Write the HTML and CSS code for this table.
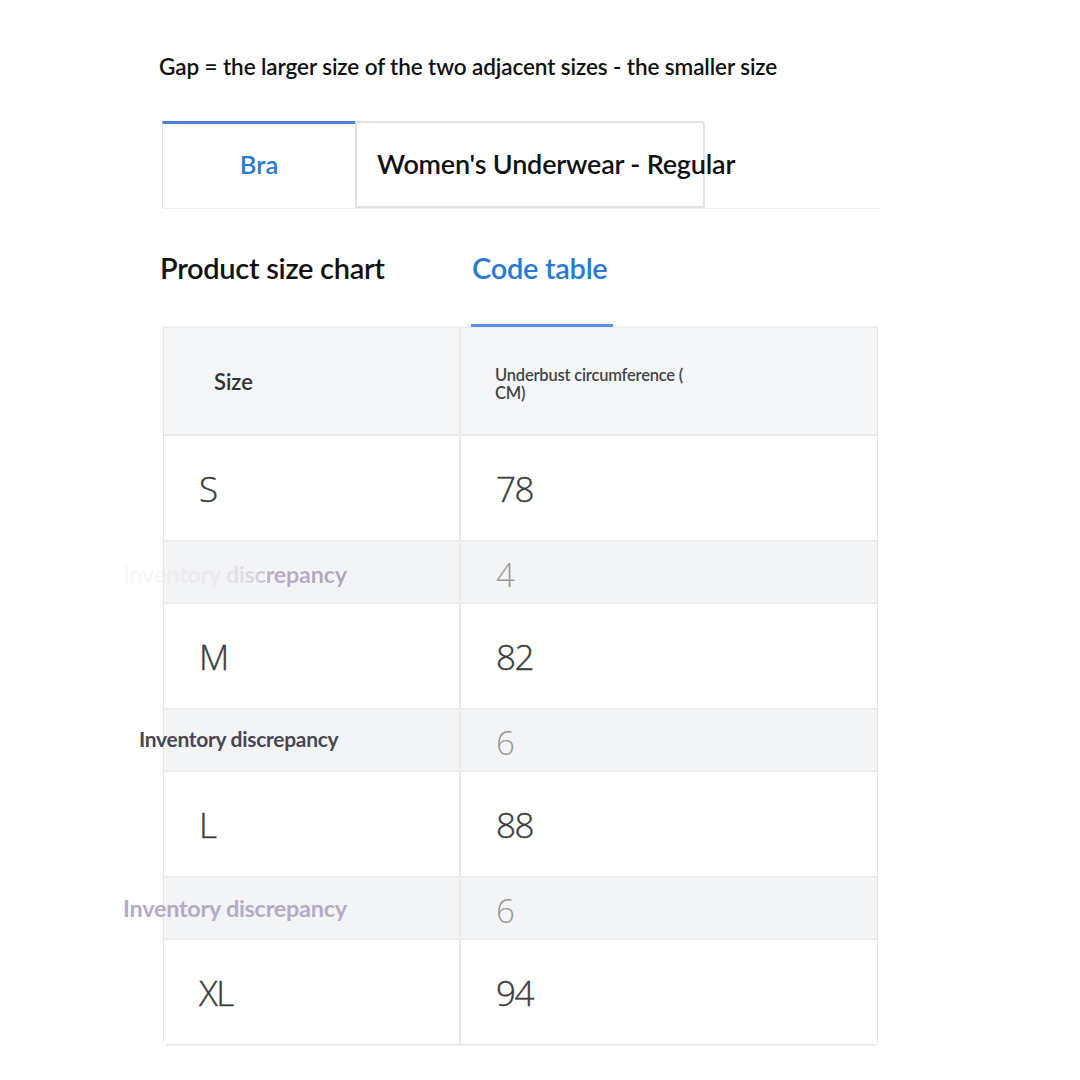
FILE: index.html
```html
<!DOCTYPE html>
<html>
<head>
<meta charset="utf-8">
<link rel="stylesheet" href="styles.css">
</head>
<body>
<div class="page">
  <div class="note">Gap = the larger size of the two adjacent sizes - the smaller size</div>
  <div class="tabs">
    <div class="tab tab-active">Bra</div>
    <div class="tab tab-plain">Women's Underwear - Regular</div>
  </div>
  <div class="subtabs">
    <div class="subtab subtab-plain">Product size chart</div>
    <div class="subtab subtab-active">Code table</div>
  </div>
  <div class="table">
    <div class="row head">
      <div class="cell c1 h-size">Size</div>
      <div class="cell c2 h-under">Underbust circumference (<br>CM)</div>
    </div>
    <div class="row size"><div class="cell c1">S</div><div class="cell c2">78</div></div>
    <div class="row gap"><div class="cell c1"><span class="lbl lbl-fade">Inventory discrepancy</span></div><div class="cell c2">4</div></div>
    <div class="row size"><div class="cell c1">M</div><div class="cell c2">82</div></div>
    <div class="row gap"><div class="cell c1"><span class="lbl lbl-dark">Inventory discrepancy</span></div><div class="cell c2">6</div></div>
    <div class="row size"><div class="cell c1">L</div><div class="cell c2">88</div></div>
    <div class="row gap"><div class="cell c1"><span class="lbl lbl-lav">Inventory discrepancy</span></div><div class="cell c2">6</div></div>
    <div class="row size last"><div class="cell c1">XL</div><div class="cell c2">94</div></div>
  </div>
</div>
</body>
</html>
```
FILE: styles.css
```css
html, body {
  margin: 0;
  padding: 0;
  background: #fff;
}
body {
  font-family: Lato, "Open Sans", sans-serif;
  color: #111;
}
.page {
  width: 1080px;
  height: 1080px;
  padding-top: 52px;
  box-sizing: border-box;
}
.note {
  margin-left: 159px;
  font-size: 22.5px;
  font-weight: 600;
  line-height: 30px;
  color: #111;
  letter-spacing: -0.1px;
}
.tabs {
  display: flex;
  margin-top: 39px;
  margin-left: 162px;
  width: 718px;
  height: 87px;
  border-bottom: 1px solid #f0f0f0;
}
.tab {
  box-sizing: border-box;
  height: 87px;
  display: flex;
  align-items: center;
  font-weight: 600;
  white-space: nowrap;
}
.tab-active {
  width: 193px;
  justify-content: center;
  font-size: 25.5px;
  color: #2a7ad4;
  border-top: 3px solid #4a7fdc;
  border-left: 1px solid #e6e6e6;
  padding-bottom: 4px;
  background: #fff;
}
.tab-plain {
  width: 350px;
  padding-left: 20px;
  font-size: 27px;
  color: #111;
  border: 2px solid #e2e2e2;
  border-radius: 0 4px 0 0;
  padding-bottom: 2px;
  letter-spacing: -0.2px;
  overflow: visible;
}
.subtabs {
  display: flex;
  height: 118px;
  margin-left: 160px;
  width: 718px;
  box-sizing: border-box;
  border-bottom: 1px solid #f2f2f2;
}
.subtab {
  font-size: 29px;
  font-weight: 600;
  letter-spacing: -0.3px;
  height: 118px;
  box-sizing: border-box;
  padding-top: 41px;
  line-height: 36px;
}
.subtab-plain {
  color: #111;
  width: 311px;
}
.subtab-active {
  color: #2a7ad4;
  width: 142px;
  border-bottom: 3px solid #5b8fe4;
  padding-left: 1px;
}
.table {
  margin-left: 163px;
  width: 715px;
  border: 1px solid #e4e4e4;
  border-top: none;
  border-radius: 0 0 5px 5px;
  box-sizing: border-box;
  box-shadow: 0 1px 2px rgba(0,0,0,0.06);
}
.row {
  display: grid;
  grid-template-columns: 297px 1fr;
  border-bottom: 2px solid #ebebeb;
  box-sizing: border-box;
}
.row.last {
  border-bottom: none;
}
.cell {
  display: flex;
  align-items: center;
  position: relative;
}
.c1 {
  border-right: 2px solid #e8e8e8;
}
.head {
  height: 109px;
  background: #f5f6f8;
  border-top: 1px solid #ececec;
}
.h-size {
  padding-left: 50px;
  font-size: 22px;
  font-weight: 600;
  color: #333;
}
.h-under {
  padding-left: 34px;
  font-size: 16.5px;
  font-weight: 600;
  color: #444;
  line-height: 18px;
  padding-top: 6px;
  letter-spacing: -0.2px;
}
.size {
  height: 106px;
  background: #fff;
}
.size.last {
  height: 104px;
}
.size .cell {
  font-family: "Open Sans", sans-serif;
  font-weight: 300;
  font-size: 35px;
  color: #3e3e3e;
  letter-spacing: -1.5px;
  padding-top: 1px;
  -webkit-text-stroke: 0.4px #3e3e3e;
}
.size .c1 {
  padding-left: 35px;
}
.size .c2 {
  padding-left: 35px;
}
.gap {
  height: 62px;
  background: #f3f4f6;
}
.gap .c2 {
  font-family: "Open Sans", sans-serif;
  font-weight: 300;
  font-size: 33px;
  color: #9a9a9a;
  padding-left: 35px;
  padding-top: 5px;
}
.lbl {
  position: absolute;
  white-space: nowrap;
  font-family: Lato, sans-serif;
  font-weight: 700;
  letter-spacing: -0.3px;
}
.lbl-fade {
  left: -41px;
  top: 18px;
  font-size: 23.5px;
  background: linear-gradient(90deg, rgba(235,233,238,0.35) 0%, rgba(225,222,230,0.5) 45%, rgba(205,198,214,0.75) 60%, #b9abc6 66%, #b4a6c2 100%);
  -webkit-background-clip: text;
  background-clip: text;
  color: transparent;
}
.lbl-dark {
  left: -25px;
  top: 16px;
  font-size: 21px;
  color: #4b4653;
}
.lbl-lav {
  left: -41px;
  top: 16px;
  font-size: 23.5px;
  color: #b5abc4;
}
```
